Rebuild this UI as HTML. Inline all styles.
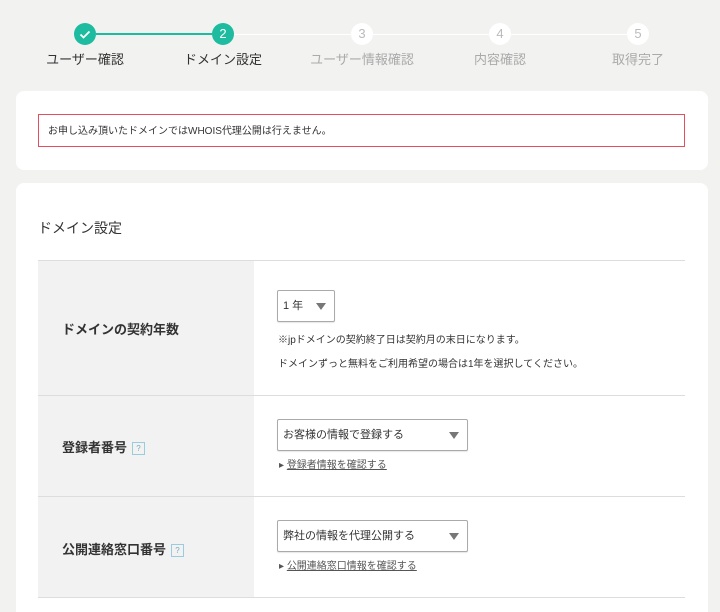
<!DOCTYPE html>
<html><head><meta charset="utf-8"><style>
*{margin:0;padding:0;box-sizing:border-box}
html,body{width:720px;height:612px;overflow:hidden}
body{background:#f2f2f0;font-family:"Liberation Sans","Noto Sans CJK JP",sans-serif;color:#333;position:relative}
.abs{position:absolute}
.c{width:22px;height:22px;border-radius:50%;text-align:center;line-height:22px;font-size:13px;color:#bbb;background:#fff}
.c.on{background:#1dbba0;color:#fff}
.ln{height:1px;background:#fff;top:34px}
.lb{top:49px;font-size:13px;color:#aaa;width:140px;text-align:center}
.card{background:#fff;border-radius:8px;left:16px;width:692px}
.sel{border:1px solid #aaa;border-radius:2px;background:#fff;font-size:11px;padding-left:5px;line-height:30px;box-shadow:0 1px 1px rgba(0,0,0,.1)}
.tri{position:absolute;right:8px;top:12px;width:0;height:0;border-left:5px solid transparent;border-right:5px solid transparent;border-top:7px solid #777}
.lft{left:38px;width:216px;background:#f2f2f2}
.rl{left:38px;width:647px;height:1px;background:#ddd}
.h{font-size:13px;font-weight:bold;color:#333}
.q{display:inline-block;width:13px;height:13px;border:1px solid #9cd;font-size:8px;line-height:11px;text-align:center;color:#7ab;vertical-align:middle;margin-left:5px;font-weight:normal}
.lk{font-size:10px;color:#555}
.lk u{color:#555}
</style></head><body>
<div class="abs ln" style="left:96px;width:116px;background:#1dbba0;height:2px;top:33px"></div>
<div class="abs ln" style="left:234px;width:117px"></div>
<div class="abs ln" style="left:373px;width:116px"></div>
<div class="abs ln" style="left:511px;width:116px"></div>
<div class="abs c on" style="left:74px;top:23px"><svg width="22" height="22"><path d="M6.5 11.5l3 3 6-6" stroke="#fff" stroke-width="1.8" fill="none"/></svg></div>
<div class="abs c on" style="left:212px;top:23px">2</div>
<div class="abs c" style="left:351px;top:23px">3</div>
<div class="abs c" style="left:489px;top:23px">4</div>
<div class="abs c" style="left:627px;top:23px">5</div>
<div class="abs lb" style="left:15px;color:#333">ユーザー確認</div>
<div class="abs lb" style="left:153px;color:#333">ドメイン設定</div>
<div class="abs lb" style="left:292px">ユーザー情報確認</div>
<div class="abs lb" style="left:430px">内容確認</div>
<div class="abs lb" style="left:568px">取得完了</div>

<div class="abs card" style="top:91px;height:79px"></div>
<div class="abs" style="left:38px;top:114px;width:647px;height:33px;border:1px solid #e0505e;font-size:10px;line-height:33px;padding-left:9px">お申し込み頂いたドメインではWHOIS代理公開は行えません。</div>

<div class="abs card" style="top:183px;height:440px"></div>
<div class="abs" style="left:38px;top:218px;font-size:14px">ドメイン設定</div>
<div class="abs lft" style="top:260px;height:337px"></div>
<div class="abs rl" style="top:260px"></div>
<div class="abs rl" style="top:395px"></div>
<div class="abs rl" style="top:496px"></div>
<div class="abs rl" style="top:597px"></div>

<div class="abs h" style="left:62px;top:319px">ドメインの契約年数</div>
<div class="abs sel" style="left:277px;top:290px;width:58px;height:32px">1 年<span class="tri"></span></div>
<div class="abs" style="left:278px;top:331px;font-size:10px">※jpドメインの契約終了日は契約月の末日になります。</div>
<div class="abs" style="left:278px;top:355px;font-size:10px">ドメインずっと無料をご利用希望の場合は1年を選択してください。</div>

<div class="abs h" style="left:62px;top:437px">登録者番号<span class="q">?</span></div>
<div class="abs sel" style="left:277px;top:419px;width:191px;height:32px">お客様の情報で登録する<span class="tri"></span></div>
<div class="abs lk" style="left:279px;top:456px">▸ <u>登録者情報を確認する</u></div>

<div class="abs h" style="left:62px;top:539px">公開連絡窓口番号<span class="q">?</span></div>
<div class="abs sel" style="left:277px;top:520px;width:191px;height:32px">弊社の情報を代理公開する<span class="tri"></span></div>
<div class="abs lk" style="left:279px;top:557px">▸ <u>公開連絡窓口情報を確認する</u></div>
</body></html>
